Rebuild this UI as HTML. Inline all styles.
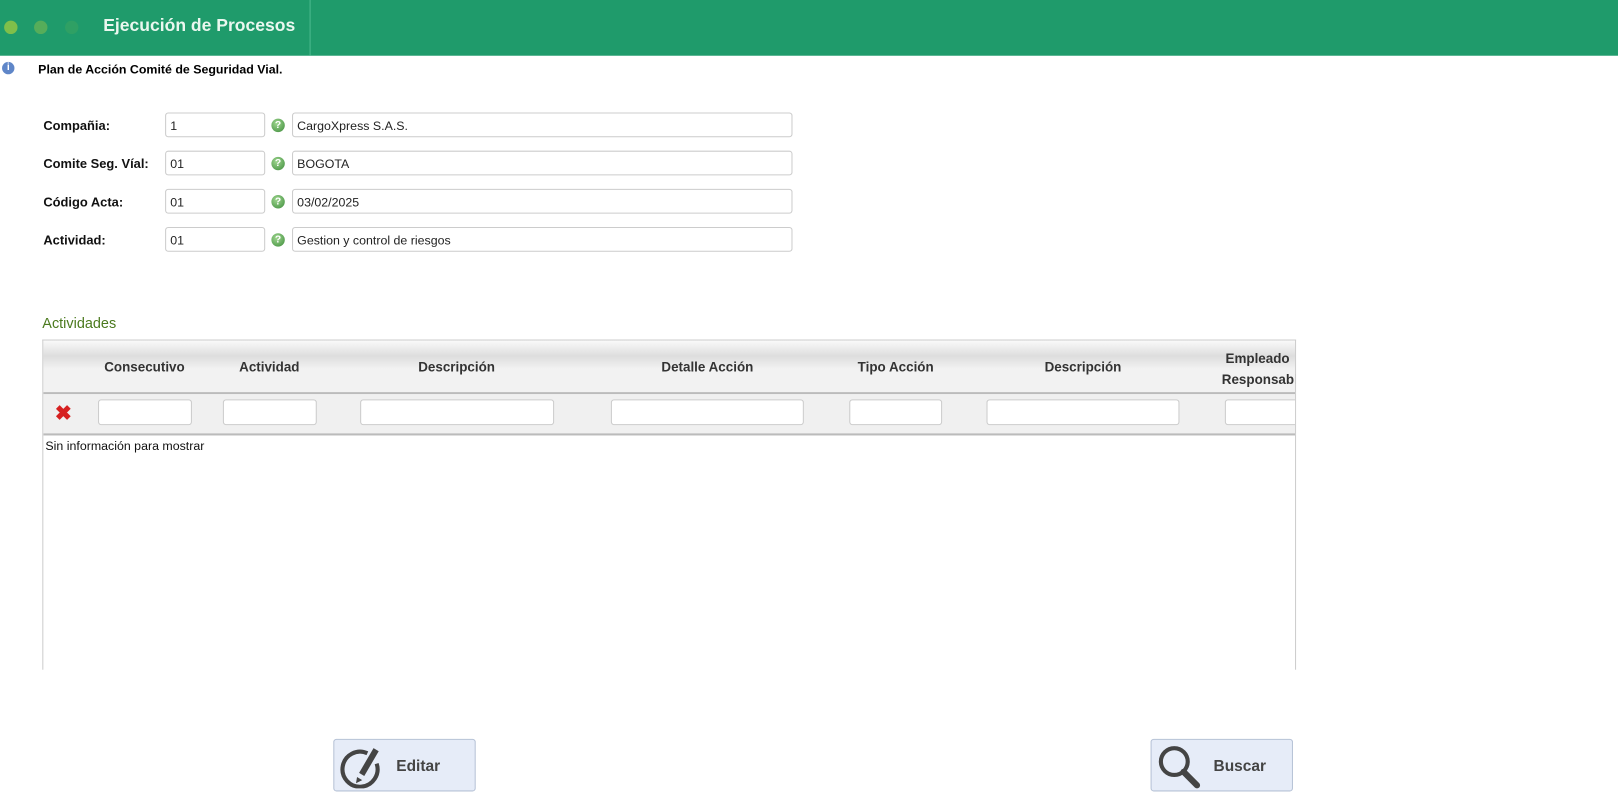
<!DOCTYPE html>
<html><head><meta charset="utf-8"><style>
body{margin:0;width:1618px;height:804px;background:#fff;font-family:"Liberation Sans",sans-serif;position:relative;overflow:hidden}
#w{position:absolute;left:0;top:0;width:1568px;height:780px;transform:scale(1.0319);transform-origin:0 0}
.hdr{position:absolute;left:0;top:0;width:1568px;height:54px;background:#1f9b6b}
.hdr .t{position:absolute;left:100px;top:15px;color:#eaf7ef;font-weight:bold;font-size:17px}
.dot{position:absolute;top:20px;width:13px;height:13px;border-radius:50%}
.sep{position:absolute;left:300px;top:0;width:1px;height:54px;background:#4bb98d}
.abs{position:absolute}
.lbl{position:absolute;left:42px;font-size:12.5px;font-weight:bold;color:#111}
.in{position:absolute;height:24px;border:1px solid #ccc;border-radius:3px;box-sizing:border-box;font-size:12px;padding:5px 4px;background:#fff;color:#222}
.q{position:absolute;left:263px;width:13px;height:13px;border-radius:50%;background:radial-gradient(circle at 40% 35%,#9fd68f,#3c8b3a);color:#fff;font-size:10px;font-weight:bold;text-align:center;line-height:13px}
.th{position:absolute;top:348px;font-size:13px;font-weight:bold;color:#333;text-align:center}
.btn{position:absolute;top:716px;width:138px;height:51px;border:1px solid #b6c2d6;border-radius:3px;background:#e6ecf8;box-sizing:border-box}
.btn span{position:absolute;left:60px;top:17px;font-weight:bold;font-size:15px;color:#444}
</style></head><body><div id="w">
<div class="hdr"><div class="dot" style="left:4px;background:#7fbf4a"></div><div class="dot" style="left:33px;background:#56ad5a"></div><div class="dot" style="left:63px;background:#2fa064"></div><div class="sep"></div><div class="t">Ejecución de Procesos</div></div>
<div class="abs" style="left:2px;top:60px;width:12px;height:12px;border-radius:50%;background:#5f86c8;color:#fff;font-size:10px;font-weight:bold;text-align:center;line-height:12px">i</div>
<div class="abs" style="left:37px;top:60px;font-size:12px;font-weight:bold">Plan de Acción Comité de Seguridad Vial.</div>

<div class="lbl" style="top:115px">Compañia:</div>
<div class="in" style="left:160px;top:109px;width:97px">1</div><div class="q" style="top:115px">?</div>
<div class="in" style="left:283px;top:109px;width:485px">CargoXpress S.A.S.</div>
<div class="lbl" style="top:152px">Comite Seg. Víal:</div>
<div class="in" style="left:160px;top:146px;width:97px">01</div><div class="q" style="top:152px">?</div>
<div class="in" style="left:283px;top:146px;width:485px">BOGOTA</div>
<div class="lbl" style="top:189px">Código Acta:</div>
<div class="in" style="left:160px;top:183px;width:97px">01</div><div class="q" style="top:189px">?</div>
<div class="in" style="left:283px;top:183px;width:485px">03/02/2025</div>
<div class="lbl" style="top:226px">Actividad:</div>
<div class="in" style="left:160px;top:220px;width:97px">01</div><div class="q" style="top:226px">?</div>
<div class="in" style="left:283px;top:220px;width:485px">Gestion y control de riesgos</div>

<div class="abs" style="left:41px;top:305px;font-size:14px;color:#4b7a1e">Actividades</div>
<div class="abs" style="left:41px;top:329px;width:1215px;height:320px;border:1px solid #ccc;border-bottom:none;box-sizing:border-box;overflow:hidden">
 <div class="abs" style="left:0;top:0;width:100%;height:50px;background:linear-gradient(#fafafa,#ddd 30%,#f2f2f2 55%,#f2f2f2);border-bottom:2px solid #bbb"></div>
 <div class="abs" style="left:0;top:52px;width:100%;height:38px;background:#f0f0f0;border-bottom:2px solid #bbb"></div>
 <div class="abs" style="left:2px;top:95px;font-size:12px;color:#111">Sin información para mostrar</div>
 <div class="abs" style="left:11px;top:58px;color:#d62020;font-size:20px;font-weight:bold">✖</div>
 <div class="th" style="left:1142px;top:8px;width:80px;text-align:left;line-height:20px;white-space:nowrap">&nbsp;Empleado<br>Responsable</div>
 <div class="in" style="left:1145px;top:57px;width:80px;height:25px"></div>
</div>
<div class="th" style="left:95px;width:90px">Consecutivo</div>
<div class="th" style="left:216px;width:90px">Actividad</div>
<div class="th" style="left:349px;width:187px">Descripción</div>
<div class="th" style="left:592px;width:187px">Detalle Acción</div>
<div class="th" style="left:823px;width:90px">Tipo Acción</div>
<div class="th" style="left:956px;width:187px">Descripción</div>
<div class="in" style="left:95px;top:387px;width:91px;height:25px"></div>
<div class="in" style="left:216px;top:387px;width:91px;height:25px"></div>
<div class="in" style="left:349px;top:387px;width:188px;height:25px"></div>
<div class="in" style="left:592px;top:387px;width:187px;height:25px"></div>
<div class="in" style="left:823px;top:387px;width:90px;height:25px"></div>
<div class="in" style="left:956px;top:387px;width:187px;height:25px"></div>

<div class="btn" style="left:323px"><svg class="abs" style="left:5px;top:5px" width="44" height="42" viewBox="0 0 44 42"><path d="M27 8A17 17 0 1 0 36 18" fill="none" stroke="#444" stroke-width="4"/><path d="M33 3L38 6L24 30L19 27Z" fill="#444"/><path d="M17 31L22 34L16 37Z" fill="#444"/></svg><span>Editar</span></div>
<div class="btn" style="left:1115px"><svg class="abs" style="left:4px;top:4px" width="46" height="44" viewBox="0 0 46 44"><circle cx="18" cy="17" r="13" fill="none" stroke="#444" stroke-width="4"/><path d="M27 27L40 40" stroke="#444" stroke-width="6" stroke-linecap="round"/></svg><span>Buscar</span></div>
</div></body></html>
